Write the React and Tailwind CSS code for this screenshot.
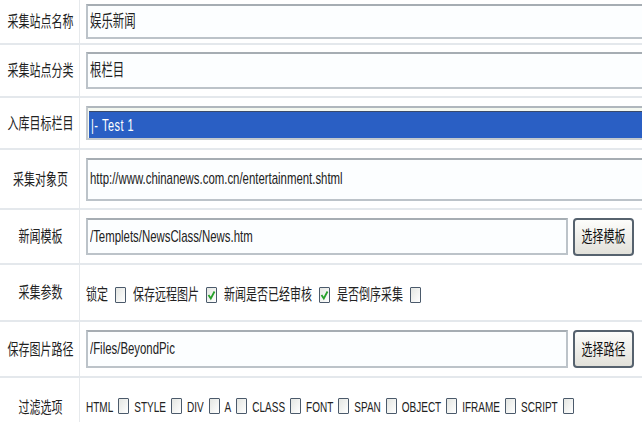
import React from 'react';

const cjk = { fontFamily: '"Liberation Sans", "Noto Sans CJK SC", sans-serif' };

// tall text, the form is drawn stretched
function T({ children, className = '' }) {
  return <span className={`inline-block scale-y-[1.45] origin-center whitespace-nowrap ${className}`}>{children}</span>;
}

function Box({ checked }) {
  return (
    <span className="inline-flex items-center justify-center w-[11px] h-[16px] border border-[#4b5a6b] bg-gradient-to-br from-[#e4e6e2] to-white rounded-[1px] shrink-0">
      {checked && (
        <svg width="9" height="12" viewBox="0 0 9 12">
          <path d="M1.5 6 L3.8 9.5 L7.5 2.5" fill="none" stroke="#27a12a" strokeWidth="1.8" />
        </svg>
      )}
    </span>
  );
}

function Input({ value, wide }) {
  return (
    <div className={`flex items-center border-2 border-[#bcc3c9] border-t-[#a6adb3] bg-[#fcfeff] pl-[2px] ${wide ? 'flex-1 -mr-[20px]' : 'w-[482px]'}`}>
      <T className="text-[11.4px] text-[#222]">{value}</T>
    </div>
  );
}

function Btn({ label }) {
  return (
    <button className="ml-[5px] w-[61px] h-[38px] rounded-[4px] border-2 border-[#56626e] bg-gradient-to-b from-[#fdfdfb] to-[#e2e1da] flex items-center justify-center">
      <T className="text-[11px] text-[#111]">{label}</T>
    </button>
  );
}

function Row({ label, h, children }) {
  return (
    <div className={`flex border-b-2 border-[#e4e8ec] ${h}`}>
      <div className="w-[80px] shrink-0 border-r border-[#e6e9ec] flex items-center justify-center pl-[2px]">
        <T className="text-[11px] text-[#222]">{label}</T>
      </div>
      <div className="flex-1 flex items-center pl-[6px] overflow-hidden">{children}</div>
    </div>
  );
}

export default function App() {
  const filters = ['HTML', 'STYLE', 'DIV', 'A', 'CLASS', 'FONT', 'SPAN', 'OBJECT', 'IFRAME', 'SCRIPT'];
  return (
    <div className="w-[642px] h-[422px] overflow-hidden bg-white" style={cjk}>
      <Row label="采集站点名称" h="h-[45px]">
        <div className="flex-1 h-[35px] -mr-[20px] flex"><Input value="娱乐新闻" wide /></div>
      </Row>
      <Row label="采集站点分类" h="h-[53px]">
        <div className="flex-1 h-[37px] -mr-[20px] flex"><Input value="根栏目" wide /></div>
      </Row>
      <Row label="入库目标栏目" h="h-[52px]">
        <div className="flex-1 h-[34px] -mr-[20px] border-2 border-[#c3c9ce] border-t-[#b0b7bd] bg-[#f4f8f0] pt-[3px] pl-[1px]">
          <div className="h-full bg-[#2a5fc4] border-t border-[#3a4a6a] flex items-center pl-[2px]">
            <T className="text-[11px] text-white tracking-[0.5px]">|- Test 1</T>
          </div>
        </div>
      </Row>
      <Row label="采集对象页" h="h-[60px]">
        <div className="flex-1 h-[43px] -mr-[20px] flex"><Input value="http://www.chinanews.com.cn/entertainment.shtml" wide /></div>
      </Row>
      <Row label="新闻模板" h="h-[55px]">
        <div className="h-[37px] flex"><Input value="/Templets/NewsClass/News.htm" /></div>
        <Btn label="选择模板" />
      </Row>
      <Row label="采集参数" h="h-[57px]">
        <div className="flex items-center gap-[7px] text-[11px] text-[#222] pt-[4px]">
          <T>锁定</T><Box />
          <T>保存远程图片</T><Box checked />
          <T>新闻是否已经审核</T><Box checked />
          <T>是否倒序采集</T><Box />
        </div>
      </Row>
      <Row label="保存图片路径" h="h-[56px]">
        <div className="h-[38px] flex"><Input value="/Files/BeyondPic" /></div>
        <Btn label="选择路径" />
      </Row>
      <Row label="过滤选项" h="h-[60px]">
        <div className="flex items-center gap-[5px] text-[10px] text-[#222] -mt-[2px]">
          {filters.map((f) => (
            <React.Fragment key={f}>
              <T>{f}</T>
              <Box />
            </React.Fragment>
          ))}
        </div>
      </Row>
    </div>
  );
}
